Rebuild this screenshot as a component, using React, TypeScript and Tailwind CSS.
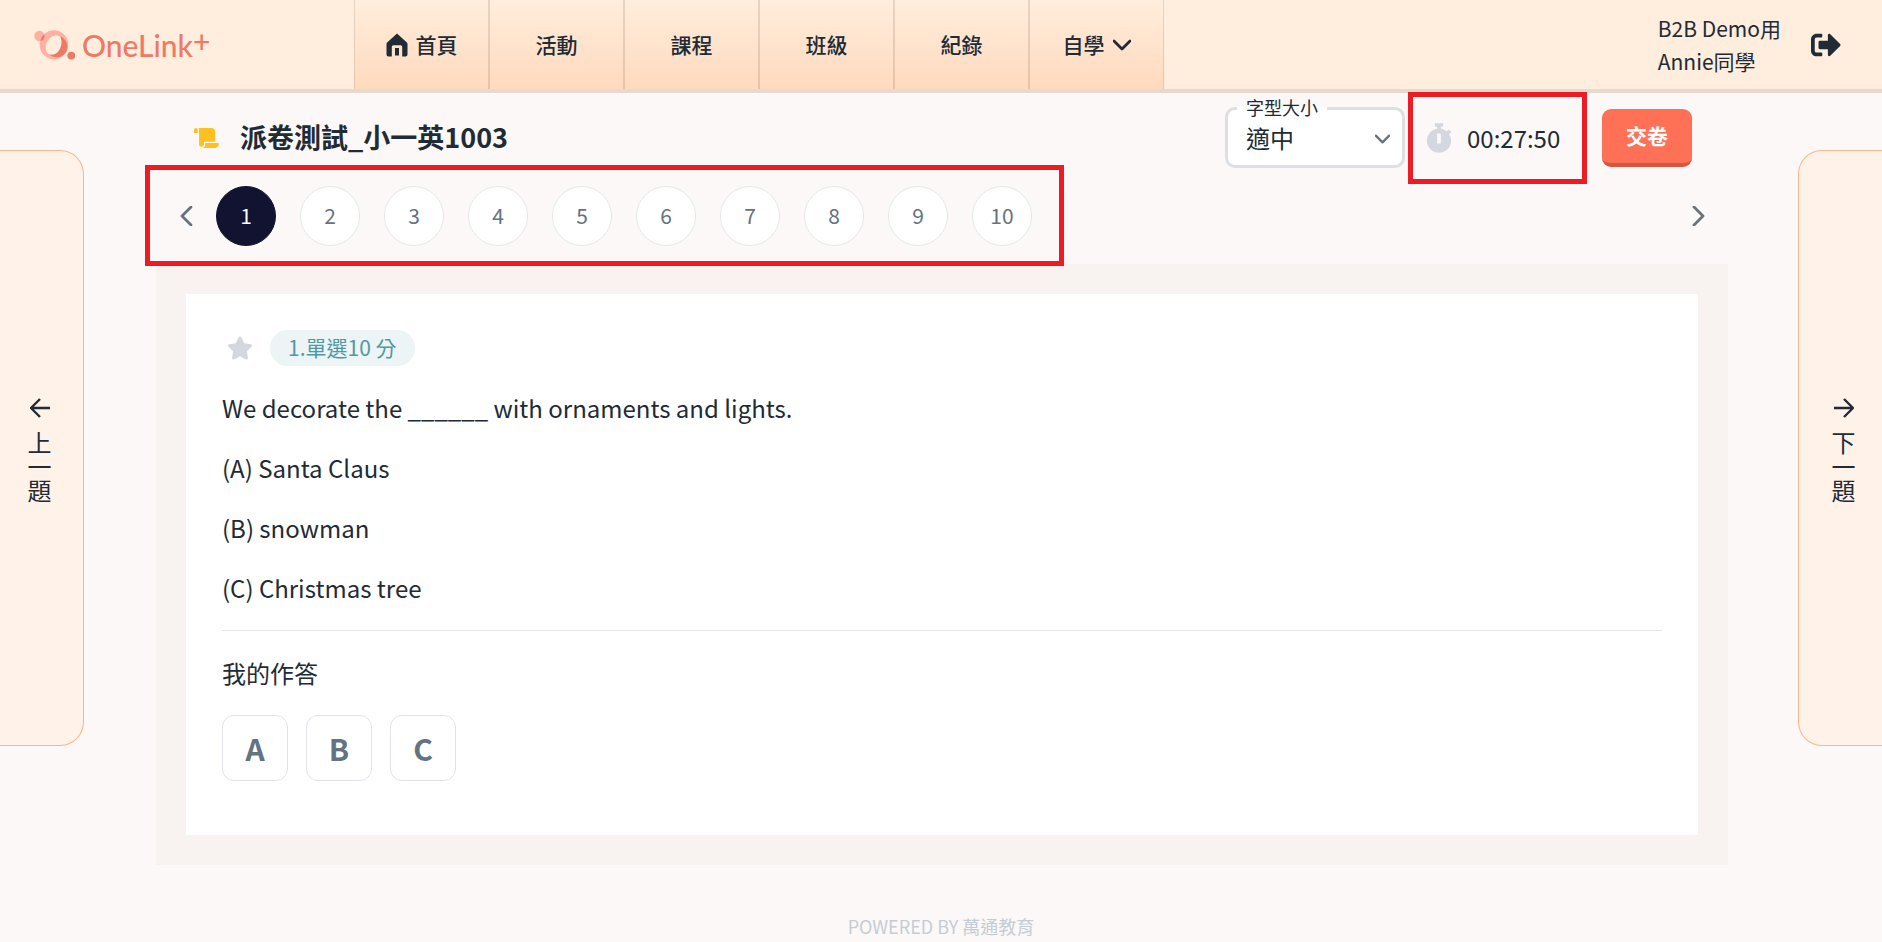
import React, { useState } from 'react'
import { FaScroll, FaSignOutAlt, FaStar, FaStopwatch } from 'react-icons/fa'

const navItems = [
  { label: '首頁', icon: 'home' },
  { label: '活動' },
  { label: '課程' },
  { label: '班級' },
  { label: '紀錄' },
  { label: '自學', icon: 'menu' }
]

const questionLines = [
  'We decorate the ______ with ornaments and lights.',
  '(A) Santa Claus',
  '(B) snowman',
  '(C) Christmas tree'
]

const answers = ['A', 'B', 'C']
const questionCount = 10

interface ChevronProps {
  direction: 'left' | 'right' | 'down'
  className?: string
}

const Chevron: React.FC<ChevronProps> = ({ direction, className }) => {
  const points = {
    left: '11,1 2,10 11,19',
    right: '2,1 11,10 2,19',
    down: '1,2 9,10 17,2'
  }
  return (
    <svg
      viewBox={direction === 'down' ? '0 0 18 12' : '0 0 13 20'}
      className={className}
      fill="none"
      stroke="currentColor"
      strokeLinecap="round"
      strokeLinejoin="round"
      aria-hidden="true"
    >
      <polyline points={points[direction]} strokeWidth="2.8" />
    </svg>
  )
}

const HomeIcon = () => (
  <svg viewBox="0 0 22 24" className="w-[22px] h-6" fill="currentColor" aria-hidden="true">
    <path
      fillRule="evenodd"
      d="M11 .5 20.6 9.2c.6.5.9 1.1.9 1.9V21.5a2 2 0 0 1-2 2H16.2V13.8a1.5 1.5 0 0 0-1.5-1.5H7.3a1.5 1.5 0 0 0-1.5 1.5V23.5H2.5a2 2 0 0 1-2-2V11.1c0-.8.3-1.4.9-1.900Z"
    />
    <path d="M9 15h4v7.5H9z" />
  </svg>
)

const LogoMark = () => (
  <svg viewBox="0 0 42 30" className="w-[42px] h-[30px]" aria-hidden="true">
    <circle cx="5.5" cy="6" r="5.2" fill="#ffb0a2" />
    <path
      fillRule="evenodd"
      fill="#ffb0a2"
      d="M20 .2a14.3 14.6 0 1 1 0 29.2a14.3 14.6 0 1 1 0-29.2ZM22.5 5.5C16 5.5 11.5 12 11.8 18c.2 5 3.2 7.2 6.2 7.2c6 0 10.5-6.5 10.2-12.5c-.3-4.5-2.7-7.2-5.7-7.2Z"
    />
    <path fill="#ec7a67" d="M26.500 6.500c4.3 2 6.8 5.6 6.8 10c0 6.5-4.8 10.700-9.8 10.700c-4 0-6.8-1-8.3-3c2.5 1 6.3.5 9-2.700c3.3-4 4.3-10 2.3-15Z" />
    <path fill="#ec7a67" d="M6.5 11.1c.4-3 1.8-5.4 4.1-6.6c.4 3-1.3 6.2-4.1 6.6Z" />
    <circle cx="37.3" cy="25.6" r="3.9" fill="#ec7a67" />
  </svg>
)

const ArrowIcon = ({ flip = false }: { flip?: boolean }) => (
  <svg
    viewBox="0 0 20 20"
    className="w-5 h-5"
    fill="none"
    stroke="currentColor"
    strokeWidth="2.4"
    strokeLinejoin="round"
    aria-hidden="true"
  >
    <path d={flip ? 'M0 10H18.5M10 1 19 10 10 19' : 'M20 10H1.5M10 1 1 10 10 19'} />
  </svg>
)

const Header = () => (
  <header className="flex h-[93px] shrink-0 items-stretch border-b-4 border-[#e5d9d0] bg-[#ffeddd]">
    <a href="#" className="flex w-[354px] items-center pl-[34px] text-[#ec7a67]">
      <LogoMark />
      <span className="ml-1.5 flex items-start font-['Lato',sans-serif] text-[30px] leading-8 font-medium">
        OneLink
        <span className="leading-6">+</span>
      </span>
    </a>
    <nav className="flex text-[21px] font-medium">
      {navItems.map((item) => (
        <a
          key={item.label}
          href="#"
          className="flex w-[135px] items-center justify-center gap-2 border-x border-black/10 bg-linear-to-b from-[#ffeddd] to-[#ffdabd]"
        >
          {item.icon === 'home' && <HomeIcon />}
          {item.label}
          {item.icon === 'menu' && <Chevron direction="down" className="w-[18px] h-3" />}
        </a>
      ))}
    </nav>
    <div className="ml-auto flex items-center pr-[41px]">
      <p className="mr-[30px] text-[21px] leading-[33px]">
        B2B Demo用
        <br />
        Annie同學
      </p>
      <button type="button" aria-label="登出">
        <FaSignOutAlt size={30} />
      </button>
    </div>
  </header>
)

const App: React.FC = () => {
  const [current, setCurrent] = useState(1)
  const [fontSize, setFontSize] = useState('適中')
  const [answer, setAnswer] = useState('')
  const [starred, setStarred] = useState(false)

  const goTo = (page: number) => setCurrent(Math.min(questionCount, Math.max(1, page)))

  return (
    <div className="flex min-h-screen flex-col bg-[#fcf8f7] font-['Noto_Sans_CJK_TC',sans-serif] text-[#212b36]">
      <Header />

      <div className="flex items-start">
        <button
          type="button"
          onClick={() => goTo(current - 1)}
          className="mt-[57px] flex h-[596px] w-[84px] shrink-0 flex-col items-center justify-center gap-3 rounded-r-3xl border border-l-0 border-[#ffb587] bg-[#fff2e9] pt-1 pr-1"
        >
          <ArrowIcon />
          <span className="w-6 text-2xl leading-6 break-all">上一題</span>
        </button>

        <main className="mr-[70px] ml-18 min-w-0 flex-1 pt-[14px]">
          {/* Title bar */}
          <div className="flex h-[61px] items-center pr-9 pl-[38px]">
            <FaScroll className="h-5 w-[25px] text-[#ffc121]" />
            <h1 className="ml-[21px] text-[27px] font-bold">派卷測試_小一英1003</h1>

            <div className="relative ml-auto">
              <label
                htmlFor="font-size"
                className="absolute -top-3 left-[12px] bg-linear-to-b from-[#fcf8f7] from-50% to-white to-50% px-[9px] text-lg leading-6"
              >
                字型大小
              </label>
              <select
                id="font-size"
                value={fontSize}
                onChange={(e) => setFontSize(e.target.value)}
                className="h-[61px] w-[180px] appearance-none rounded-[10px] border-3 border-[#dce0e5] bg-white pl-[18px] text-2xl"
              >
                <option>小</option>
                <option>適中</option>
                <option>大</option>
              </select>
              <Chevron
                direction="down"
                className="pointer-events-none absolute top-[27px] right-[15px] h-2.5 w-[15px] text-[#637381]"
              />
            </div>

            <div className="relative ml-[3px] flex w-[179px] items-center self-stretch pl-[18px]">
              <FaStopwatch className="h-[30px] w-[26px] text-[#d4d7df]" />
              <time className="ml-[15px] text-2xl">00:27:50</time>
              <span className="pointer-events-none absolute inset-x-0 -top-[15px] -bottom-4 border-5 border-[#ed1c24]" />
            </div>

            <button
              type="button"
              className="ml-[15px] h-[58px] w-[90px] rounded-[9px] border-b-4 border-[#d85640] bg-[#ff7156] text-[21px] font-bold text-white"
            >
              交卷
            </button>
          </div>

          {/* Question numbers */}
          <div className="my-[18px] flex justify-between text-[#637381]">
            <div className="relative flex pr-8">
              <button
                type="button"
                aria-label="上一頁"
                onClick={() => goTo(current - 1)}
                className="flex w-[60px] items-center justify-center"
              >
                <Chevron direction="left" className="h-5 w-[13px]" />
              </button>
              <div className="flex gap-6">
                {Array.from({ length: questionCount }, (_, i) => i + 1).map((page) => (
                  <button
                    key={page}
                    type="button"
                    onClick={() => goTo(page)}
                    className={`size-[60px] rounded-full border text-[21px] ${
                      page === current
                        ? 'border-[#121330] bg-[#121330] text-white'
                        : 'border-[#e5e8eb] bg-white'
                    }`}
                  >
                    {page}
                  </button>
                ))}
              </div>
              <span className="pointer-events-none absolute -top-[21px] right-0 -bottom-5 -left-[11px] border-5 border-[#ed1c24]" />
            </div>
            <button
              type="button"
              aria-label="下一頁"
              onClick={() => goTo(current + 1)}
              className="flex w-[60px] items-center justify-center"
            >
              <Chevron direction="right" className="h-5 w-[13px]" />
            </button>
          </div>

          {/* Question */}
          <section className="bg-[#f8f3f0] p-[30px]">
            <div className="bg-white px-9 pt-9 pb-[54px]">
              <div className="flex items-center gap-3">
                <button
                  type="button"
                  aria-label="收藏"
                  onClick={() => setStarred(!starred)}
                  className={`flex w-9 justify-center ${starred ? 'text-[#ffc121]' : 'text-[#d4d7df]'}`}
                >
                  <FaStar size={26} />
                </button>
                <span className="rounded-full bg-[#ecf4f6] px-[18px] pb-0.5 text-[21px] leading-[34px] text-[#4f99a4]">
                  1.單選10 分
                </span>
              </div>
              <div className="mt-3 border-b border-[#e5e8eb] pb-3 text-2xl leading-[60px]">
                {questionLines.map((line) => (
                  <p key={line}>{line}</p>
                ))}
              </div>
              <h2 className="pt-6 text-2xl leading-9">我的作答</h2>
              <div className="mt-6 flex gap-[18px]">
                {answers.map((item) => (
                  <button
                    key={item}
                    type="button"
                    onClick={() => setAnswer(item)}
                    className={`size-[66px] rounded-xl border text-[30px] font-bold text-[#637381] ${
                      answer === item ? 'border-[#637381]' : 'border-[#e2e3e9]'
                    }`}
                  >
                    {item}
                  </button>
                ))}
              </div>
            </div>
          </section>
        </main>

        <button
          type="button"
          onClick={() => goTo(current + 1)}
          className="mt-[57px] flex h-[596px] w-[84px] shrink-0 flex-col items-center justify-center gap-3 rounded-l-3xl border border-r-0 border-[#ffb587] bg-[#fff2e9] pt-1 pl-1.5"
        >
          <ArrowIcon flip />
          <span className="w-6 text-2xl leading-6 break-all">下一題</span>
        </button>
      </div>

      <footer className="mt-auto text-center text-lg leading-8 text-[#c4cdd5]">POWERED BY 萬通教育</footer>
    </div>
  )
}

export default App
